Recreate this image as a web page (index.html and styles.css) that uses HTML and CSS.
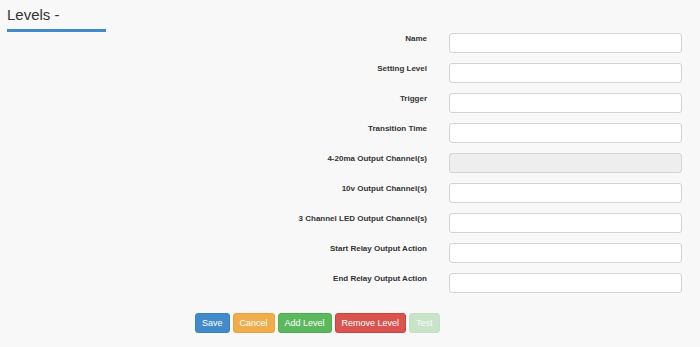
FILE: index.html
```html
<!DOCTYPE html>
<html lang="en">
<head>
  <meta charset="UTF-8" />
  <meta name="viewport" content="width=device-width, initial-scale=1.0" />
  <title>Levels</title>
  <link rel="stylesheet" href="styles.css">
</head>
<body>
  <header class="page-head">
    <h2>Levels -</h2>
  </header>

  <!-- Level form -->
  <form class="level-form" onsubmit="return false;">
    <label for="name">Name</label>
    <input type="text" id="name" />

    <label for="settingLevel">Setting Level</label>
    <input type="text" id="settingLevel" />

    <label for="trigger">Trigger</label>
    <input type="text" id="trigger" />

    <label for="transition">Transition Time</label>
    <input type="text" id="transition" />

    <label for="out420">4-20ma Output Channel(s)</label>
    <input type="text" id="out420" disabled />

    <label for="out10v">10v Output Channel(s)</label>
    <input type="text" id="out10v" />

    <label for="outLed">3 Channel LED Output Channel(s)</label>
    <input type="text" id="outLed" />

    <label for="startRelay">Start Relay Output Action</label>
    <input type="text" id="startRelay" />

    <label for="endRelay">End Relay Output Action</label>
    <input type="text" id="endRelay" />
  </form>

  <div class="actions">
    <button class="btn btn-primary">Save</button>
    <button class="btn btn-warning">Cancel</button>
    <button class="btn btn-success">Add Level</button>
    <button class="btn btn-danger">Remove Level</button>
    <button class="btn btn-success" disabled>Test</button>
  </div>
</body>
</html>
```

FILE: styles.css
```css
body {
  font-family: "Liberation Sans", Arial, sans-serif;
  background-color: #f8f8f8;
  color: #333;
  margin: 0;
  padding: 0;
}
.page-head {
  padding: 5px 0 0 7px;
}
.page-head h2 {
  display: inline-block;
  width: 99px;
  margin: 0;
  padding-bottom: 4px;
  font-size: 15px;
  line-height: 20px;
  font-weight: normal;
  border-bottom: 3px solid #428bca;
}
.level-form {
  display: grid;
  grid-template-columns: 427px 233px;
  column-gap: 22px;
  row-gap: 10px;
  margin-top: 1px;
}
.level-form label {
  text-align: right;
  font-size: 8px;
  font-weight: bold;
  padding-top: 1px;
}
.level-form input {
  height: 20px;
  box-sizing: border-box;
  border: 1px solid #d4d4d4;
  border-radius: 3px;
  background: #fff;
  margin: 0;
  padding: 2px 6px;
}
.level-form input:disabled {
  background: #eee;
}
.actions {
  display: flex;
  gap: 3px;
  padding-left: 195px;
  margin-top: 20px;
}
.btn {
  height: 20px;
  padding: 0 6px;
  font-family: inherit;
  font-size: 9px;
  color: #fff;
  border: 1px solid transparent;
  border-radius: 3px;
  cursor: pointer;
}
.btn-primary { background: #428bca; border-color: #3c80bd; }
.btn-warning { background: #f0ad4e; border-color: #eea236; }
.btn-success { background: #5cb85c; border-color: #4cae4c; }
.btn-danger { background: #d9534f; border-color: #d43f3a; }
.btn:disabled {
  opacity: 0.3;
  cursor: default;
}
```
